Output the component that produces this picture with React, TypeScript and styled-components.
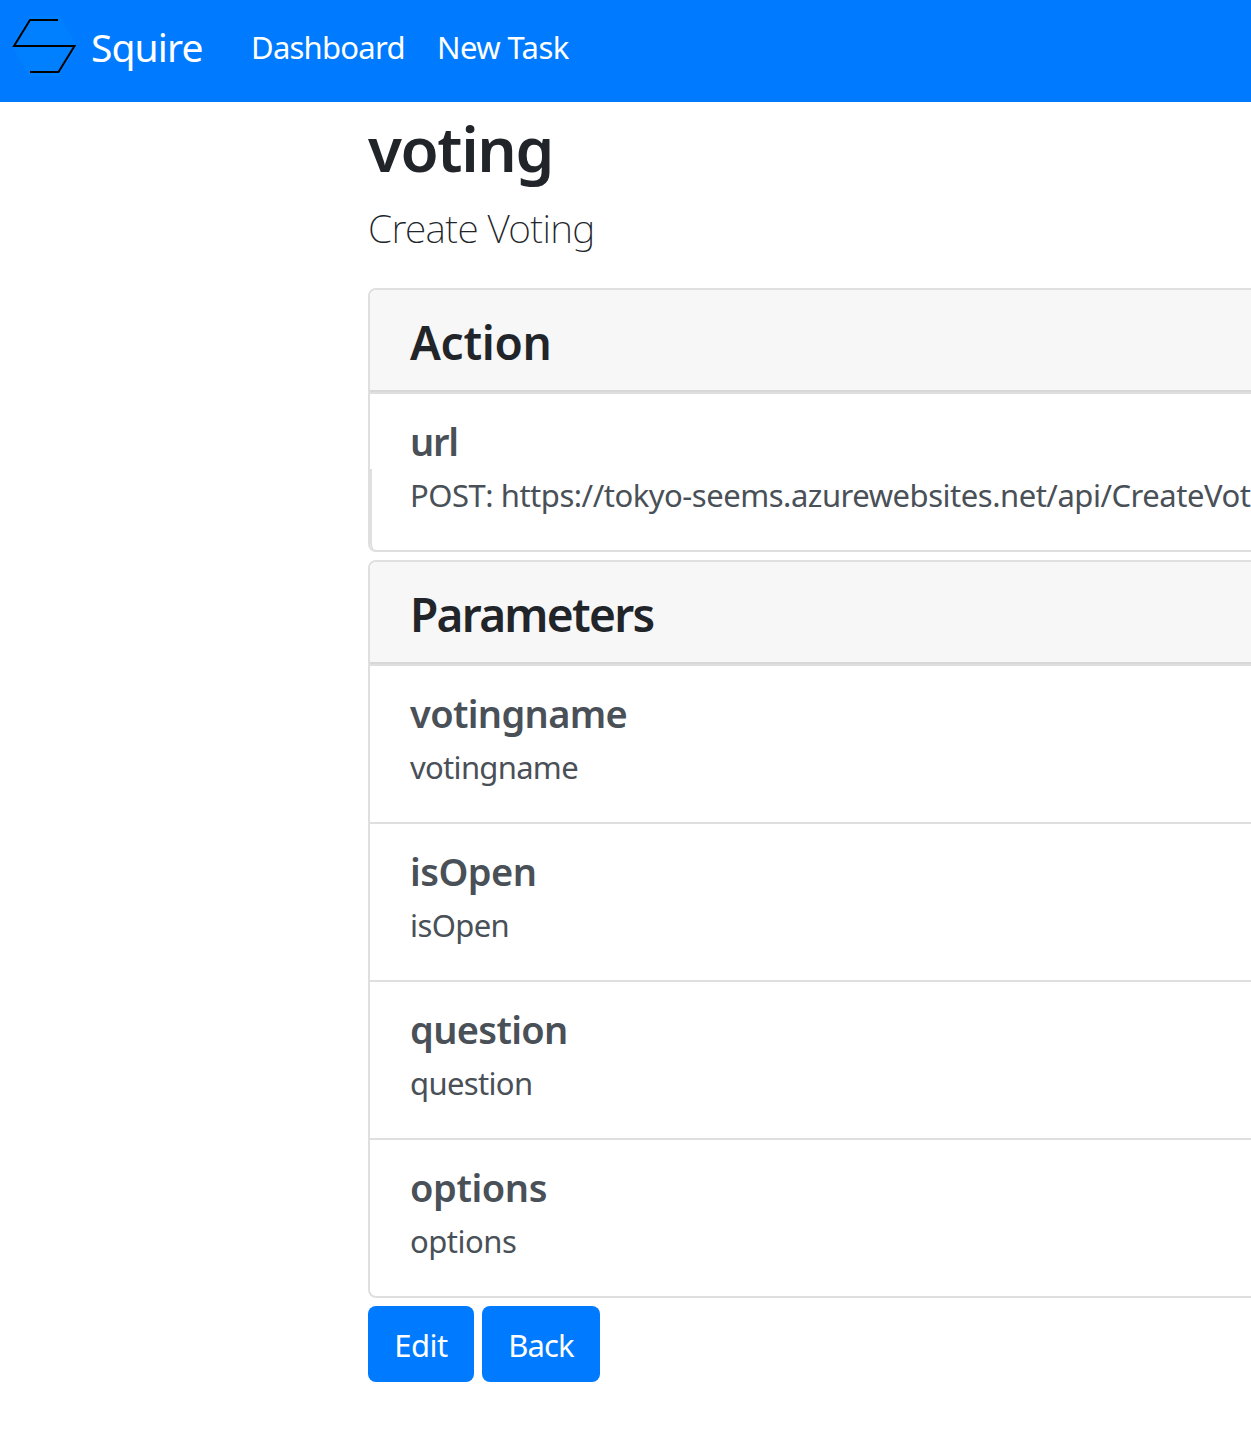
import React from "react";
import styled, { createGlobalStyle } from "styled-components";

const GlobalStyle = createGlobalStyle`
  *, *::before, *::after { box-sizing: border-box; }
  html { overflow: hidden; }
  body {
    margin: 0;
    background: #fff;
    color: #212529;
    font-family: "Noto Sans", "Open Sans", sans-serif;
    font-size: 31px;
    line-height: 48px;
  }
`;

interface FitProps { $tracking?: number }

const Page = styled.div`
  width: 1251px;
  height: 1455px;
  overflow: hidden;
`;

const Navbar = styled.nav`
  display: flex;
  align-items: flex-start;
  height: 102px;
  padding: 0 12px;
  background: #007bff;
  color: #fff;
  white-space: nowrap;
`;

const Logo = styled.svg`
  flex: none;
  display: block;
  width: 66px;
  height: 64px;
  margin-top: 14px;
`;

const Brand = styled.a<FitProps>`
  width: 160px;
  margin: 17px 0 0 13px;
  font-size: 39px;
  line-height: 60px;
  letter-spacing: ${(p) => p.$tracking ?? 0}px;
`;

const NavLink = styled.a<FitProps & { $width: number }>`
  width: ${(p) => p.$width}px;
  margin-top: 23px;
  letter-spacing: ${(p) => p.$tracking ?? 0}px;
`;

const Main = styled.main`
  width: 1140px;
  margin-left: 368px;
  white-space: nowrap;
`;

const Title = styled.h1<FitProps>`
  margin: 0;
  padding-top: 8px;
  font-size: 62px;
  font-weight: 600;
  line-height: 77px;
  letter-spacing: ${(p) => p.$tracking ?? 0}px;
`;

const Lead = styled.p<FitProps>`
  margin: 10px 0 30px;
  font-size: 39px;
  font-weight: 250;
  line-height: 61px;
  letter-spacing: ${(p) => p.$tracking ?? 0}px;
`;

const Card = styled.section`
  margin-bottom: 8px;
  border: 2px solid #dfdfdf;
  border-radius: 8px;
  overflow: hidden;
`;

const CardHeader = styled.header`
  height: 102px;
  padding: 24px 40px 0;
  border-bottom: 2px solid #d8d8d8;
  background: #f7f7f7;
`;

const CardTitle = styled.h3<FitProps>`
  margin: 0;
  font-size: 46px;
  font-weight: 580;
  line-height: 57px;
  letter-spacing: ${(p) => p.$tracking ?? 0}px;
`;

const Item = styled.div<{ $marked?: boolean }>`
  position: relative;
  height: 158px;
  padding: 24px 40px;
  border-top: 2px solid #dfdfdf;
  color: #495057;

  &::before {
    content: "";
    display: ${(p) => (p.$marked ? "block" : "none")};
    position: absolute;
    left: 0;
    top: 75px;
    bottom: 0;
    width: 6px;
    border-left: 2px solid #dfdfdf;
    border-bottom-left-radius: 6px;
  }
`;

const ItemTitle = styled.h5<FitProps>`
  margin: 0 0 7px;
  font-size: 38px;
  font-weight: 600;
  line-height: 46px;
  letter-spacing: ${(p) => p.$tracking ?? 0}px;
`;

const ItemText = styled.p<FitProps>`
  margin: 0;
  letter-spacing: ${(p) => p.$tracking ?? 0}px;
`;

const Actions = styled.div`
  display: flex;
  gap: 8px;
`;

const Button = styled.button<FitProps & { $width: number }>`
  width: ${(p) => p.$width}px;
  height: 76px;
  padding: 2px 0 0;
  border: 0;
  border-radius: 8px;
  background: #007bff;
  color: #fff;
  font: inherit;
  letter-spacing: ${(p) => p.$tracking ?? 0}px;
`;

const parameters = [
  { name: "votingname", title: -0.65, text: -0.7 },
  { name: "isOpen", title: -0.55, text: -0.6 },
  { name: "question", title: -0.65, text: -0.65 },
  { name: "options", title: -0.4, text: -0.5 },
];

export default function App() {
  return (
    <Page>
      <GlobalStyle />
      <Navbar>
        <Logo viewBox="12 14 66 64" fill="none">
          <path d="M12 46 29 16H59L77 46 59 76H29Z" fill="#0080ff" />
          <path d="M58 20H30L14 46H74.5L58.5 72H30" stroke="#000" strokeWidth="2" />
        </Logo>
        <Brand $tracking={-0.9}>Squire</Brand>
        <NavLink $width={186} $tracking={-0.75}>Dashboard</NavLink>
        <NavLink $width={150} $tracking={-0.6}>New Task</NavLink>
      </Navbar>
      <Main>
        <Title $tracking={-1.4}>voting</Title>
        <Lead $tracking={-0.65}>Create Voting</Lead>
        <Card>
          <CardHeader><CardTitle $tracking={-0.3}>Action</CardTitle></CardHeader>
          <Item $marked>
            <ItemTitle $tracking={-1.2}>url</ItemTitle>
            <ItemText $tracking={-0.48}>POST: https://tokyo-seems.azurewebsites.net/api/CreateVoting</ItemText>
          </Item>
        </Card>
        <Card>
          <CardHeader><CardTitle $tracking={-1.7}>Parameters</CardTitle></CardHeader>
          {parameters.map((p) => (
            <Item key={p.name}>
              <ItemTitle $tracking={p.title}>{p.name}</ItemTitle>
              <ItemText $tracking={p.text}>{p.name}</ItemText>
            </Item>
          ))}
        </Card>
        <Actions>
          <Button $width={106} $tracking={-0.5}>Edit</Button>
          <Button $width={118} $tracking={-0.9}>Back</Button>
        </Actions>
      </Main>
    </Page>
  );
}
